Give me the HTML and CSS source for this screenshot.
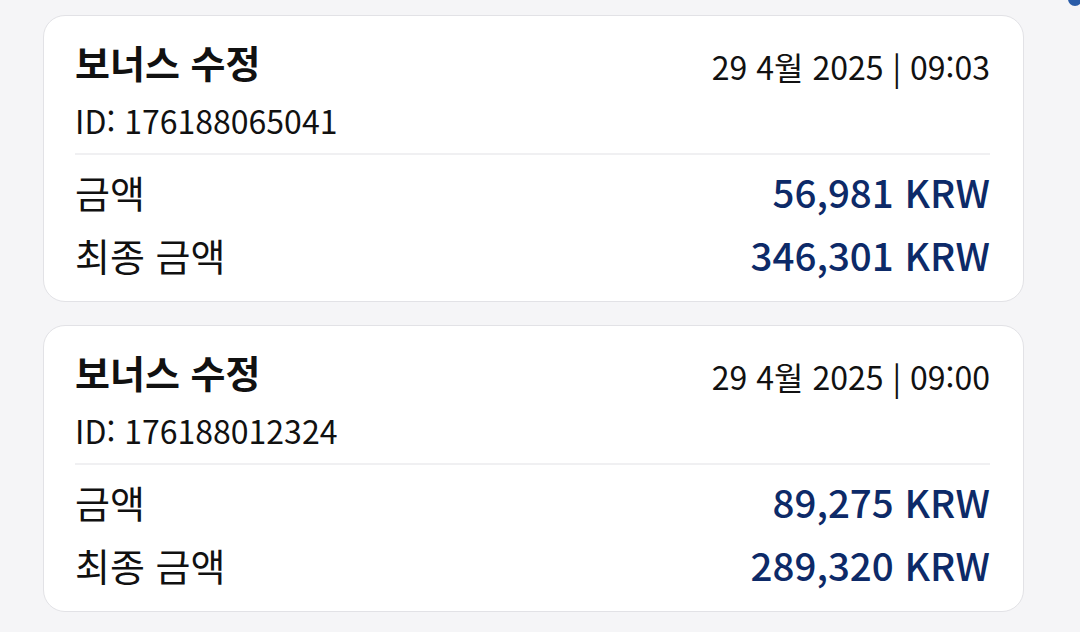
FILE: index.html
```html
<!DOCTYPE html>
<html lang="ko">
<head>
<meta charset="utf-8">
<link rel="stylesheet" href="styles.css">
</head>
<body>
<div class="dot"></div>
<div class="list">
  <div class="card">
    <div class="head">
      <div class="title">보너스 수정</div>
      <div class="date">29 4월 2025 | 09:03</div>
    </div>
    <div class="id">ID: 176188065041</div>
    <div class="divider"></div>
    <div class="row"><span class="label">금액</span><span class="value">56,981 KRW</span></div>
    <div class="row"><span class="label">최종 금액</span><span class="value">346,301 KRW</span></div>
  </div>
  <div class="card">
    <div class="head">
      <div class="title">보너스 수정</div>
      <div class="date">29 4월 2025 | 09:00</div>
    </div>
    <div class="id">ID: 176188012324</div>
    <div class="divider"></div>
    <div class="row"><span class="label">금액</span><span class="value">89,275 KRW</span></div>
    <div class="row"><span class="label">최종 금액</span><span class="value">289,320 KRW</span></div>
  </div>
</div>
</body>
</html>
```
FILE: styles.css
```css
html, body {
  margin: 0;
  padding: 0;
  background: #f5f5f7;
  font-family: "Noto Sans CJK KR", "Noto Sans", sans-serif;
  color: #111;
  overflow: hidden;
}
.dot {
  position: absolute;
  left: 1068px;
  top: -8px;
  width: 14px;
  height: 14px;
  border-radius: 50%;
  background: #2a5ca8;
}
.list {
  display: flex;
  flex-direction: column;
  gap: 23px;
  padding: 15px 0 0 43px;
  width: 981px;
}
.card {
  background: #fff;
  border: 1.5px solid #e2e2e6;
  border-radius: 22px;
  padding: 21px 33px 0 31px;
  box-sizing: border-box;
  height: 287px;
}
.head {
  display: flex;
  justify-content: space-between;
  align-items: baseline;
  height: 50px;
}
.title {
  font-size: 38px;
  font-weight: 700;
  line-height: 50px;
}
.date {
  font-size: 32px;
  line-height: 50px;
  position: relative;
  top: 2px;
}
.id {
  font-size: 32px;
  line-height: 40px;
  margin-top: 13px;
}
.divider {
  height: 1.5px;
  background: #f0f0f2;
  margin: 13px 0 5px;
}
.row {
  display: flex;
  justify-content: space-between;
  align-items: baseline;
  line-height: 62px;
}
.label {
  font-size: 38px;
}
.value {
  font-size: 38.5px;
  font-weight: 500;
  color: #0d2a68;
}
```
